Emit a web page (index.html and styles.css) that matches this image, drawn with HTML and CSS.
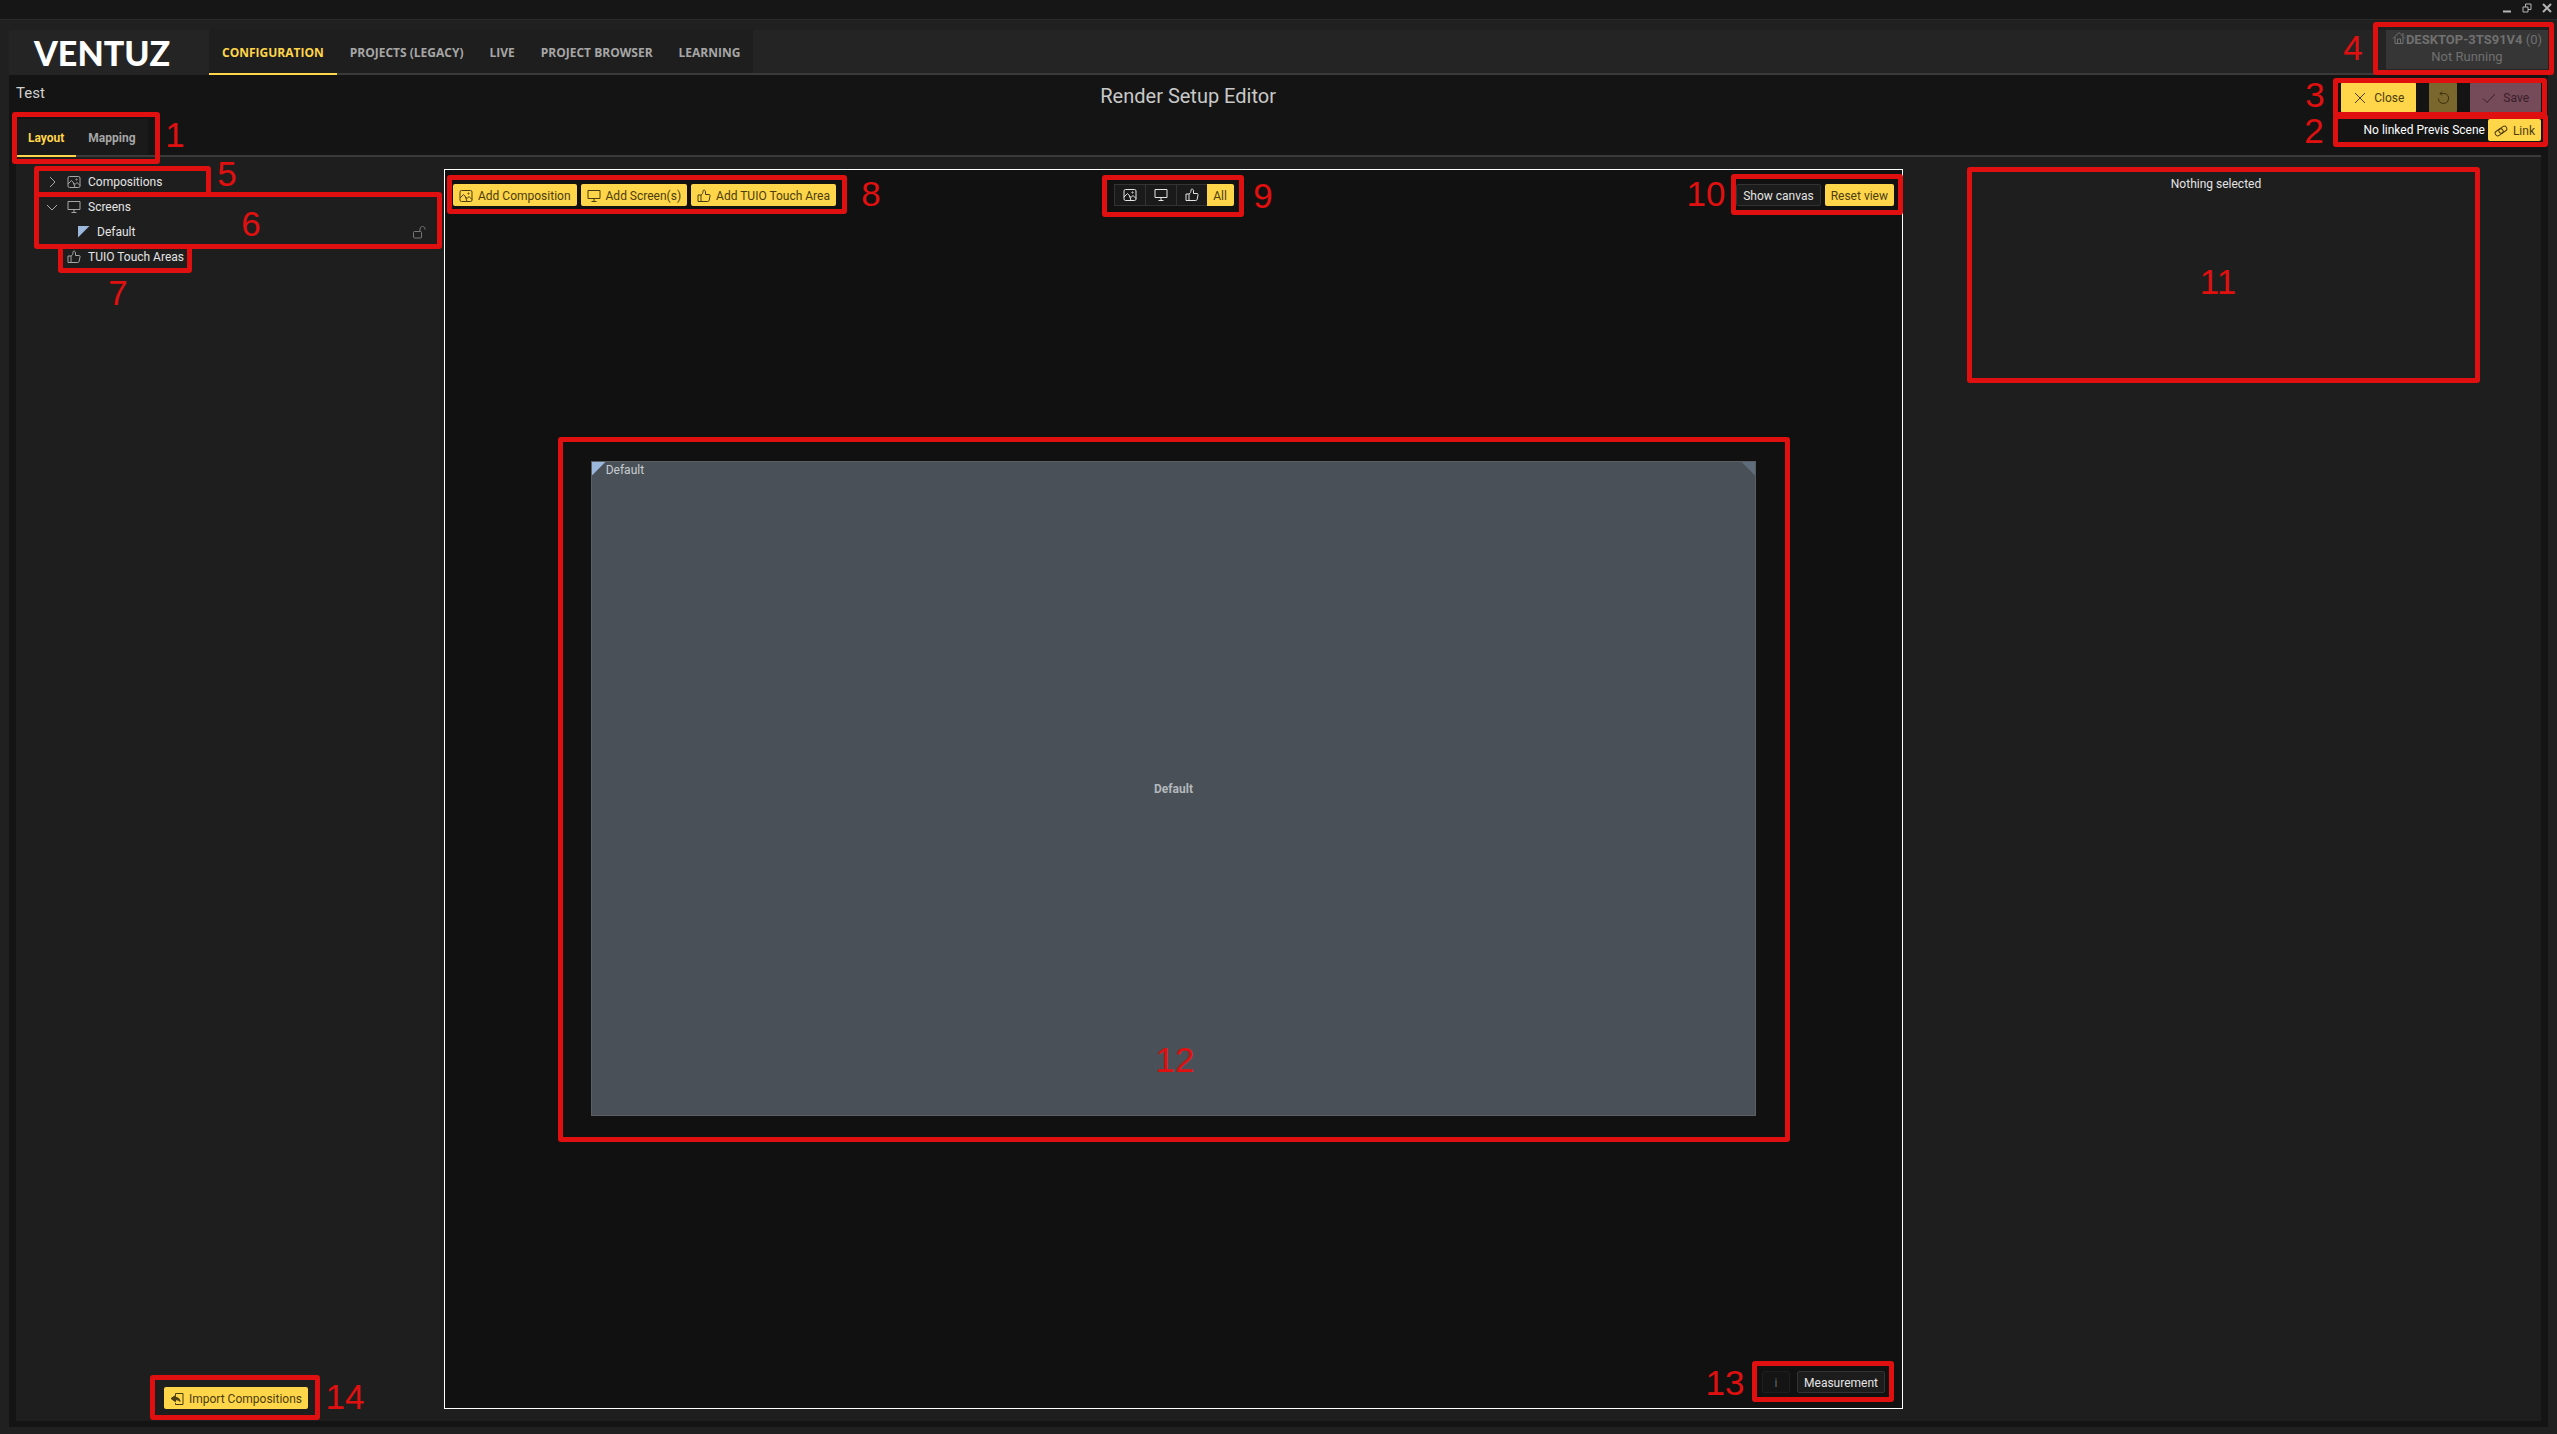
FILE: index.html
```html
<!DOCTYPE html>
<html lang="en">
<head>
  <meta charset="UTF-8">
  <meta name="viewport" content="width=device-width, initial-scale=1.0">
  <title>Ventuz - Render Setup Editor</title>
  <link rel="stylesheet" href="styles.css">
</head>
<body>
  <svg class="sprite" aria-hidden="true">
    <symbol id="icon-image" viewBox="0 0 14 14">
      <rect x="1" y="1.5" width="12" height="11" rx="1.5"/>
      <path d="M1 9l3.5-3.5L8 9.5l2-2 3 3M8 12.5L6.500 8"/>
      <circle cx="9.500" cy="4.500" r=".6"/>
    </symbol>
    <symbol id="icon-screen" viewBox="0 0 14 14">
      <path d="M1 1.500h12v8H1zM7 9.500v3M4.500 12.500h5"/>
    </symbol>
    <symbol id="icon-thumb" viewBox="0 0 14 14">
      <path d="M1 6h3v6.500H1zM4 6c1.500-.7 2-2 2-4 0-1.300 2.500-1.300 2.500.8V5.500H12c.9 0 1.200.6 1 1.500l-.8 4.200c-.2.900-.6 1.300-1.500 1.300H4"/>
    </symbol>
    <symbol id="icon-lock" viewBox="0 0 14 14">
      <rect x="1.500" y="6.500" width="8" height="6.500" rx="1"/>
      <path d="M8 6.500V4c0-3.300 5-3.300 5 0v.5"/>
    </symbol>
    <symbol id="icon-link" viewBox="0 0 14 14">
      <g transform="rotate(-35 7 7)">
        <rect x="0.500" y="4.500" width="8.500" height="5" rx="2.500"/>
        <rect x="5" y="4.500" width="8.500" height="5" rx="2.500"/>
      </g>
    </symbol>
    <symbol id="icon-import" viewBox="0 0 14 14">
      <path d="M5.500 3.500v-2H13v11H5.500v-1.500"/>
      <path class="solid" d="M1 6.500l4.500-3v2c2.700 0 4.500 1.200 4.500 4-1-1.400-2.400-1.800-4.500-1.800v2z"/>
    </symbol>
    <symbol id="icon-undo" viewBox="0 0 14 14">
      <path d="M4 2.500h4.500a5 5 0 1 1-6 5M4 2.500l2-2M4 2.500l2 2"/>
    </symbol>
    <symbol id="icon-cross" viewBox="0 0 14 14">
      <path d="M2 2l10 10M12 2L2 12"/>
    </symbol>
    <symbol id="icon-check" viewBox="0 0 14 14">
      <path d="M1 7.500l4 4L13 3"/>
    </symbol>
    <symbol id="icon-home" viewBox="0 0 14 14">
      <path d="M1 7.500l6-6 6 6M3 6v6.500h8V6M5.500 12.500V8h3v4.500M11 5V2"/>
    </symbol>
  </svg>

  <div class="titlebar">
    <button class="window-button" aria-label="Minimize"><svg viewBox="0 0 10 10"><path d="M1 8.500h8" stroke-width="2"/></svg></button>
    <button class="window-button" aria-label="Restore"><svg viewBox="0 0 10 10"><path d="M1 4h5v5H1zM3.500 4V1H9v5.500H6"/></svg></button>
    <button class="window-button" aria-label="Close window"><svg viewBox="0 0 10 10"><path d="M1 1l8 8M9 1L1 9" stroke-width="2"/></svg></button>
  </div>

  <div class="window">
    <header class="header">
      <div class="logo">VENTUZ</div>
      <nav class="nav">
        <a class="nav-link active" href="#configuration">CONFIGURATION</a>
        <a class="nav-link" href="#projects">PROJECTS (LEGACY)</a>
        <a class="nav-link" href="#live">LIVE</a>
        <a class="nav-link" href="#browser">PROJECT BROWSER</a>
        <a class="nav-link" href="#learning">LEARNING</a>
      </nav>
      <div class="machine">
        <div class="machine-name"><svg class="icon"><use href="#icon-home"/></svg><span><b>DESKTOP-3TS91V4</b> (0)</span></div>
        <div>Not Running</div>
      </div>
    </header>

    <main class="editor">
      <div class="editor-head">
        <div class="head-left">
          <div class="setup-name">Test</div>
          <div class="tabs">
            <button class="tab active">Layout</button>
            <button class="tab">Mapping</button>
          </div>
        </div>
        <h1 class="title">Render Setup Editor</h1>
        <div class="head-right">
          <div class="head-actions">
            <button class="btn btn-large"><svg class="icon"><use href="#icon-cross"/></svg>Close</button>
            <button class="btn btn-undo" aria-label="Undo" disabled><svg class="icon"><use href="#icon-undo"/></svg></button>
            <button class="btn btn-large btn-save" disabled><svg class="icon"><use href="#icon-check"/></svg>Save</button>
          </div>
          <div class="previs">
            <span>No linked Previs Scene</span>
            <button class="btn"><svg class="icon"><use href="#icon-link"/></svg>Link</button>
          </div>
        </div>
      </div>

      <div class="workspace">
        <aside class="sidebar">
          <ul class="tree">
            <li class="tree-row">
              <svg class="chevron" viewBox="0 0 12 12"><path d="M4 1l5 5-5 5"/></svg>
              <svg class="icon"><use href="#icon-image"/></svg>Compositions
            </li>
            <li class="tree-row">
              <svg class="chevron" viewBox="0 0 12 12"><path d="M1 4l5 5 5-5"/></svg>
              <svg class="icon"><use href="#icon-screen"/></svg>Screens
            </li>
            <li class="tree-row tree-child">
              <span class="corner"></span>Default
              <svg class="icon lock"><use href="#icon-lock"/></svg>
            </li>
            <li class="tree-row tree-leaf">
              <svg class="icon"><use href="#icon-thumb"/></svg>TUIO Touch Areas
            </li>
          </ul>
          <button class="btn btn-import"><svg class="icon"><use href="#icon-import"/></svg>Import Compositions</button>
        </aside>

        <section class="canvas">
          <div class="toolbar">
            <div class="tools">
              <button class="btn"><svg class="icon"><use href="#icon-image"/></svg>Add Composition</button>
              <button class="btn"><svg class="icon"><use href="#icon-screen"/></svg>Add Screen(s)</button>
              <button class="btn"><svg class="icon"><use href="#icon-thumb"/></svg>Add TUIO Touch Area</button>
            </div>
            <div class="filter">
              <button class="filter-button" aria-label="Compositions"><svg class="icon"><use href="#icon-image"/></svg></button>
              <button class="filter-button" aria-label="Screens"><svg class="icon"><use href="#icon-screen"/></svg></button>
              <button class="filter-button" aria-label="Touch areas"><svg class="icon"><use href="#icon-thumb"/></svg></button>
              <button class="filter-button active">All</button>
            </div>
            <div class="tools tools-right">
              <button class="btn btn-dark">Show canvas</button>
              <button class="btn">Reset view</button>
            </div>
          </div>

          <div class="stage">
            <div class="screen">
              <span class="corner"></span>
              <span class="screen-label">Default</span>
              <span class="corner corner-right"></span>
              <strong class="screen-name">Default</strong>
            </div>
          </div>

          <div class="statusbar">
            <button class="btn btn-dark btn-info" disabled>i</button>
            <button class="btn btn-dark">Measurement</button>
          </div>
        </section>

        <aside class="properties">Nothing selected</aside>
      </div>
    </main>
  </div>

  <!-- numbered callouts over the interface -->
  <div class="callouts">
    <div class="box box-1"></div><span class="num num-1">1</span>
    <div class="box box-2"></div><span class="num num-2">2</span>
    <div class="box box-3"></div><span class="num num-3">3</span>
    <div class="box box-4"></div><span class="num num-4">4</span>
    <div class="box box-5"></div><span class="num num-5">5</span>
    <div class="box box-6"></div><span class="num num-6">6</span>
    <div class="box box-7"></div><span class="num num-7">7</span>
    <div class="box box-8"></div><span class="num num-8">8</span>
    <div class="box box-9"></div><span class="num num-9">9</span>
    <div class="box box-10"></div><span class="num num-10">10</span>
    <div class="box box-11"></div><span class="num num-11">11</span>
    <div class="box box-12"></div><span class="num num-12">12</span>
    <div class="box box-13"></div><span class="num num-13">13</span>
    <div class="box box-14"></div><span class="num num-14">14</span>
  </div>
</body>
</html>
```
FILE: styles.css
```css
* {
  box-sizing: border-box;
}

body {
  margin: 0;
  height: 100vh;
  display: flex;
  flex-direction: column;
  position: relative;
  background: #202020;
  color: #e4e4e4;
  font-family: Roboto, "Noto Sans", sans-serif;
  font-size: 12px;
  line-height: 16px;
  overflow: hidden;
}

button {
  font: inherit;
  margin: 0;
}

.sprite {
  position: absolute;
  width: 0;
  height: 0;
}

.icon {
  width: 14px;
  height: 14px;
  flex: none;
  fill: none;
  stroke: currentColor;
  stroke-width: 1;
}

.solid {
  fill: currentColor;
}

.titlebar {
  display: flex;
  justify-content: flex-end;
  gap: 10px;
  height: 20px;
  padding: 3px 5px 0 0;
  background: #161616;
  border-bottom: 1px solid #2a2a2a;
}

.window-button {
  width: 10px;
  height: 10px;
  padding: 0;
  border: none;
  background: none;
  color: #b4b4b4;
}

.window-button svg {
  display: block;
  width: 10px;
  height: 10px;
  fill: none;
  stroke: currentColor;
}

.window {
  flex: 1;
  display: flex;
  flex-direction: column;
  padding: 10px 9px 7px;
}

.header {
  display: flex;
  height: 45px;
  background: #242424;
  border-bottom: 2px solid #3a3a3a;
}

.logo {
  width: 200px;
  height: 45px;
  padding-left: 25px;
  background: #242424;
  color: #fff;
  font-family: Lato, sans-serif;
  font-size: 34px;
  font-weight: 900;
  line-height: 45px;
}

.nav {
  display: flex;
  height: 45px;
}

.nav-link {
  padding: 0 13px;
  background: #1e1e1e;
  border-bottom: 2px solid #3a3a3a;
  color: #a6a6a6;
  font-family: "Open Sans", "Noto Sans", sans-serif;
  font-weight: 700;
  line-height: 45px;
  text-decoration: none;
}

.nav-link.active {
  color: #ffd54a;
  border-color: #ffd54a;
}

.machine {
  width: 162px;
  height: 39px;
  margin-left: auto;
  padding: 1px 0;
  background: #363636;
  color: #707070;
  font-size: 13px;
  line-height: 17px;
  text-align: center;
}

.machine-name {
  display: flex;
  justify-content: center;
}

.editor {
  flex: 1;
  display: flex;
  flex-direction: column;
  padding: 0 7px 6px;
  background: #141414;
}

.editor-head {
  display: grid;
  grid-template-columns: 6fr auto 7fr;
  height: 82px;
  border-bottom: 2px solid #3a3a3a;
}

.head-left {
  display: flex;
  flex-direction: column;
  justify-content: space-between;
  align-items: flex-start;
}

.setup-name {
  padding-top: 6px;
  color: #d0d0d0;
  font-size: 15px;
  line-height: 24px;
}

.tabs {
  display: flex;
  height: 38px;
  margin-bottom: -2px;
}

.tab {
  padding: 2px 12px 0;
  border: none;
  border-bottom: 2px solid #3a3a3a;
  background: #1a1a1a;
  color: #a6a6a6;
  font-weight: 700;
}

.tab.active {
  color: #ffd54a;
  border-color: #ffd54a;
}

.title {
  margin: 0;
  padding-top: 8px;
  color: #c8c8c8;
  font-size: 20px;
  font-weight: 400;
  line-height: 26px;
}

.head-right {
  display: flex;
  flex-direction: column;
  align-items: flex-end;
  gap: 6px;
  padding-top: 7px;
}

.head-actions {
  display: flex;
  gap: 13px;
}

.previs {
  display: flex;
  align-items: center;
  gap: 3px;
  color: #fff;
}

.btn {
  display: flex;
  align-items: center;
  justify-content: center;
  gap: 5px;
  height: 22px;
  padding: 1px 6px 0;
  border: none;
  border-radius: 2px;
  background: #ffd54a;
  color: #4b3d10;
}

.btn-large {
  height: 31px;
  padding: 1px 12px 0;
  gap: 7px;
}

.btn-undo {
  width: 28px;
  height: 31px;
  padding: 0;
  background: #7a672e;
  color: #3a300f;
}

.btn-save {
  background: #754a59;
  color: #3a1f2a;
}

.btn-dark {
  background: #1c1c1c;
  border: 1px solid #333;
  color: #e4e4e4;
}

.workspace {
  flex: 1;
  display: grid;
  grid-template-columns: 428fr 1459fr 638fr;
  padding: 12px 0;
  background: #1e1e1e;
}

.sidebar {
  display: flex;
  flex-direction: column;
  justify-content: space-between;
  padding: 0 18px 0 30px;
}

.tree {
  list-style: none;
  margin: 0;
  padding: 0;
}

.tree-row {
  display: flex;
  align-items: center;
  gap: 7px;
  height: 25px;
}

.tree-row .icon {
  color: #a6a6a6;
}

.tree-child {
  padding-left: 32px;
}

.tree-leaf {
  padding-left: 21px;
}

.tree-row .lock {
  margin-left: auto;
  color: #777;
}

.chevron {
  width: 12px;
  height: 12px;
  margin-right: 2px;
  fill: none;
  stroke: #a6a6a6;
}

.corner {
  width: 12px;
  height: 12px;
  background: #9bb8dc;
  clip-path: polygon(0 0, 100% 0, 0 100%);
}

.btn-import {
  align-self: center;
}

.canvas {
  display: flex;
  flex-direction: column;
  border: 1px solid #fff;
  background: #111;
}

.toolbar {
  display: grid;
  grid-template-columns: 1fr auto 1fr;
  padding: 14px 8px 0;
}

.tools {
  display: flex;
  gap: 4px;
}

.tools-right {
  justify-content: flex-end;
}

.filter {
  display: flex;
  height: 22px;
}

.filter-button {
  display: flex;
  align-items: center;
  justify-content: center;
  width: 31px;
  padding: 0;
  border: 1px solid #333;
  border-right: none;
  background: #1a1a1a;
  color: #e4e4e4;
}

.filter-button.active {
  width: 27px;
  padding-top: 1px;
  border: none;
  border-radius: 0 2px 2px 0;
  background: #ffd54a;
  color: #4b3d10;
}

.stage {
  flex: 1;
  display: flex;
  align-items: center;
  justify-content: center;
}

.screen {
  position: relative;
  display: flex;
  width: 80%;
  aspect-ratio: 16 / 9;
  border: 1px solid #5c5f62;
  background: #495057;
}

.screen .corner {
  width: 14px;
  height: 14px;
}

.screen .corner-right {
  margin-left: auto;
  background: #5f6c7b;
  clip-path: polygon(0 0, 100% 0, 100% 100%);
}

.screen-label {
  color: #c8ccd0;
}

.screen-name {
  position: absolute;
  inset: 0;
  display: flex;
  align-items: center;
  justify-content: center;
  padding-top: 2px;
  color: #b4b8bc;
}

.statusbar {
  display: flex;
  justify-content: flex-end;
  gap: 7px;
  padding: 0 17px 15px;
}

.btn-info {
  width: 28px;
  border-color: #1e1e1e;
  background: #141414;
  color: #666;
}

.properties {
  padding: 7px 12px 0 0;
  text-align: center;
}

/* callouts */
.callouts {
  position: absolute;
  inset: 0;
  pointer-events: none;
}

.box {
  position: absolute;
  border: 5px solid #e01010;
  border-radius: 3px;
}

.num {
  position: absolute;
  width: 60px;
  color: #e01010;
  font-family: "Liberation Sans", Arial, sans-serif;
  font-size: 35px;
  line-height: 40px;
  text-align: center;
}

.box-1 { left: 12px; top: 112px; width: 148px; height: 52px; }
.box-2 { right: 9px; top: 114px; width: 215px; height: 33px; }
.box-3 { right: 10px; top: 78px; width: 214px; height: 39px; }
.box-4 { right: 3px; top: 22px; width: 181px; height: 53px; }
.box-5 { left: 34px; top: 166px; width: 177px; height: 31px; }
.box-6 { left: 34px; top: 192px; width: 408px; height: 57px; }
.box-7 { left: 58px; top: 244px; width: 134px; height: 29px; }
.box-8 { left: 447px; top: 175px; width: 400px; height: 39px; }
.box-9 { left: 1102px; top: 175px; width: 142px; height: 42px; }
.box-10 { right: 654px; top: 174px; width: 172px; height: 41px; }
.box-11 { right: 77px; top: 167px; width: 513px; height: 216px; }
.box-12 { left: 558px; top: 437px; width: 1232px; height: 705px; }
.box-13 { right: 663px; bottom: 32px; width: 142px; height: 41px; }
.box-14 { left: 150px; bottom: 14px; width: 170px; height: 45px; }

.num-1 { left: 145px; top: 115px; }
.num-2 { right: 213px; top: 111px; }
.num-3 { right: 212px; top: 75px; }
.num-4 { right: 174px; top: 28px; }
.num-5 { left: 197px; top: 154px; }
.num-6 { left: 221px; top: 204px; }
.num-7 { left: 88px; top: 273px; }
.num-8 { left: 841px; top: 174px; }
.num-9 { left: 1233px; top: 176px; }
.num-10 { right: 821px; top: 174px; }
.num-11 { right: 309px; top: 262px; }
.num-12 { left: 1145px; top: 1040px; }
.num-13 { right: 802px; bottom: 31px; }
.num-14 { left: 315px; bottom: 17px; }
```
